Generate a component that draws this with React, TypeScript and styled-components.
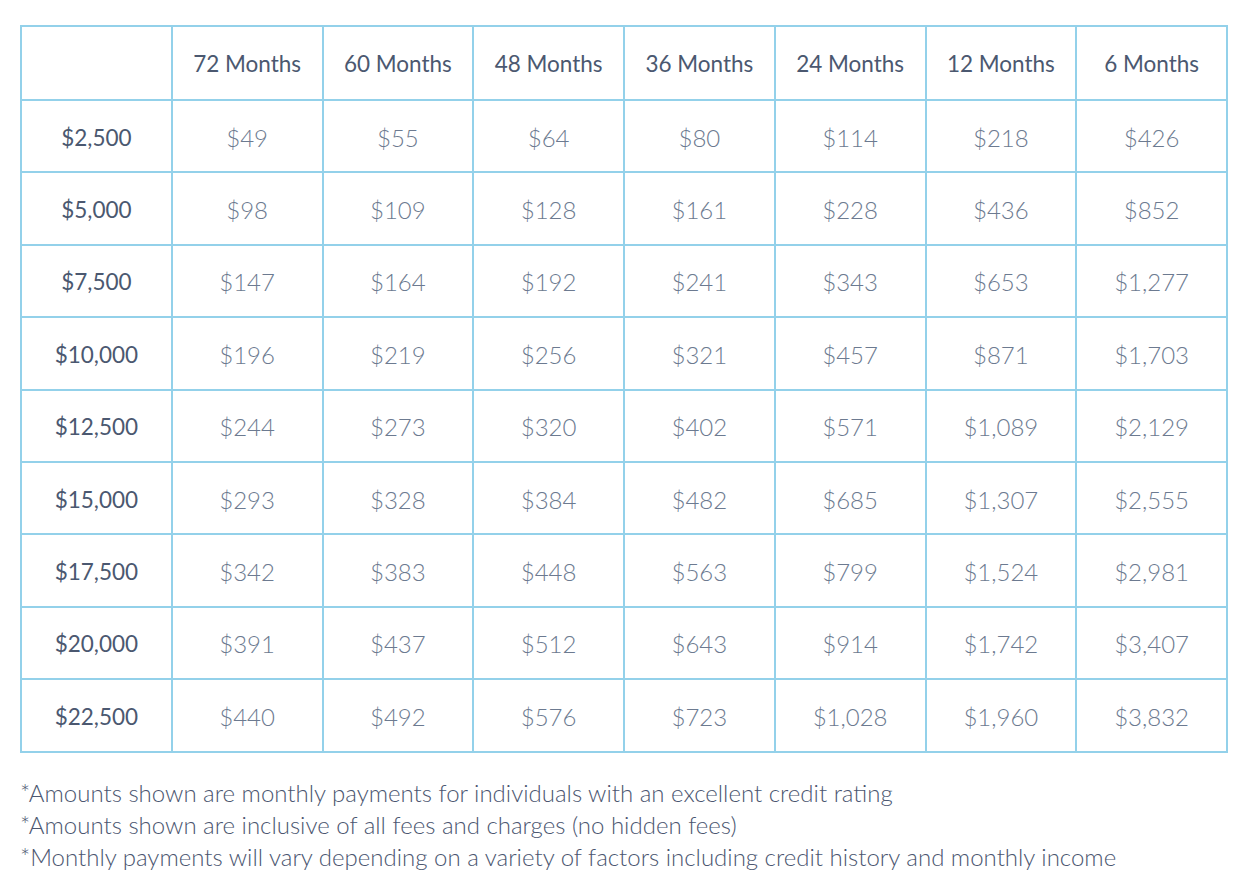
import React from "react";
import styled, { createGlobalStyle } from "styled-components";

const Global = createGlobalStyle`
  html, body { margin: 0; padding: 0; background: #ffffff; }
  body { font-family: Lato, "Open Sans", sans-serif; }
`;

const Page = styled.div`
  padding: 25px 0 0 20px;
`;

const Table = styled.table`
  width: 1208px;
  table-layout: fixed;
  border-collapse: collapse;
  border: 2px solid #93d1ea;
`;

const HeadCell = styled.th`
  height: 72px;
  border: 2px solid #93d1ea;
  font-family: Lato, sans-serif;
  font-weight: 400;
  font-size: 22.5px;
  color: #4b5870;
  text-align: center;
  vertical-align: middle;
  padding: 0;
`;

const RowHead = styled.td`
  height: 68.4px;
  border: 2px solid #93d1ea;
  font-family: Lato, sans-serif;
  font-weight: 400;
  font-size: 22.5px;
  color: #4b5870;
  text-align: center;
  padding: 2px 0 0 0;
`;

const Cell = styled.td`
  height: 68.4px;
  border: 2px solid #93d1ea;
  font-family: Lato, sans-serif;
  font-weight: 300;
  font-size: 24px;
  color: #6c7a90;
  text-align: center;
  padding: 2px 0 0 0;
`;

const Notes = styled.div`
  margin-top: 24px;
  font-family: Lato, sans-serif;
  font-weight: 300;
  font-size: 24px;
  line-height: 32px;
  color: #4b5670;
`;

const months = ["72 Months", "60 Months", "48 Months", "36 Months", "24 Months", "12 Months", "6 Months"];

const rows: [string, string[]][] = [
  ["$2,500", ["$49", "$55", "$64", "$80", "$114", "$218", "$426"]],
  ["$5,000", ["$98", "$109", "$128", "$161", "$228", "$436", "$852"]],
  ["$7,500", ["$147", "$164", "$192", "$241", "$343", "$653", "$1,277"]],
  ["$10,000", ["$196", "$219", "$256", "$321", "$457", "$871", "$1,703"]],
  ["$12,500", ["$244", "$273", "$320", "$402", "$571", "$1,089", "$2,129"]],
  ["$15,000", ["$293", "$328", "$384", "$482", "$685", "$1,307", "$2,555"]],
  ["$17,500", ["$342", "$383", "$448", "$563", "$799", "$1,524", "$2,981"]],
  ["$20,000", ["$391", "$437", "$512", "$643", "$914", "$1,742", "$3,407"]],
  ["$22,500", ["$440", "$492", "$576", "$723", "$1,028", "$1,960", "$3,832"]],
];

export default function App() {
  return (
    <>
      <Global />
      <Page>
        <Table>
          <thead>
            <tr>
              <HeadCell />
              {months.map((m) => (
                <HeadCell key={m}>{m}</HeadCell>
              ))}
            </tr>
          </thead>
          <tbody>
            {rows.map(([amt, vals]) => (
              <tr key={amt}>
                <RowHead>{amt}</RowHead>
                {vals.map((v, i) => (
                  <Cell key={i}>{v}</Cell>
                ))}
              </tr>
            ))}
          </tbody>
        </Table>
        <Notes>
          <div>*Amounts shown are monthly payments for individuals with an excellent credit rating</div>
          <div>*Amounts shown are inclusive of all fees and charges (no hidden fees)</div>
          <div>*Monthly payments will vary depending on a variety of factors including credit history and monthly income</div>
        </Notes>
      </Page>
    </>
  );
}
